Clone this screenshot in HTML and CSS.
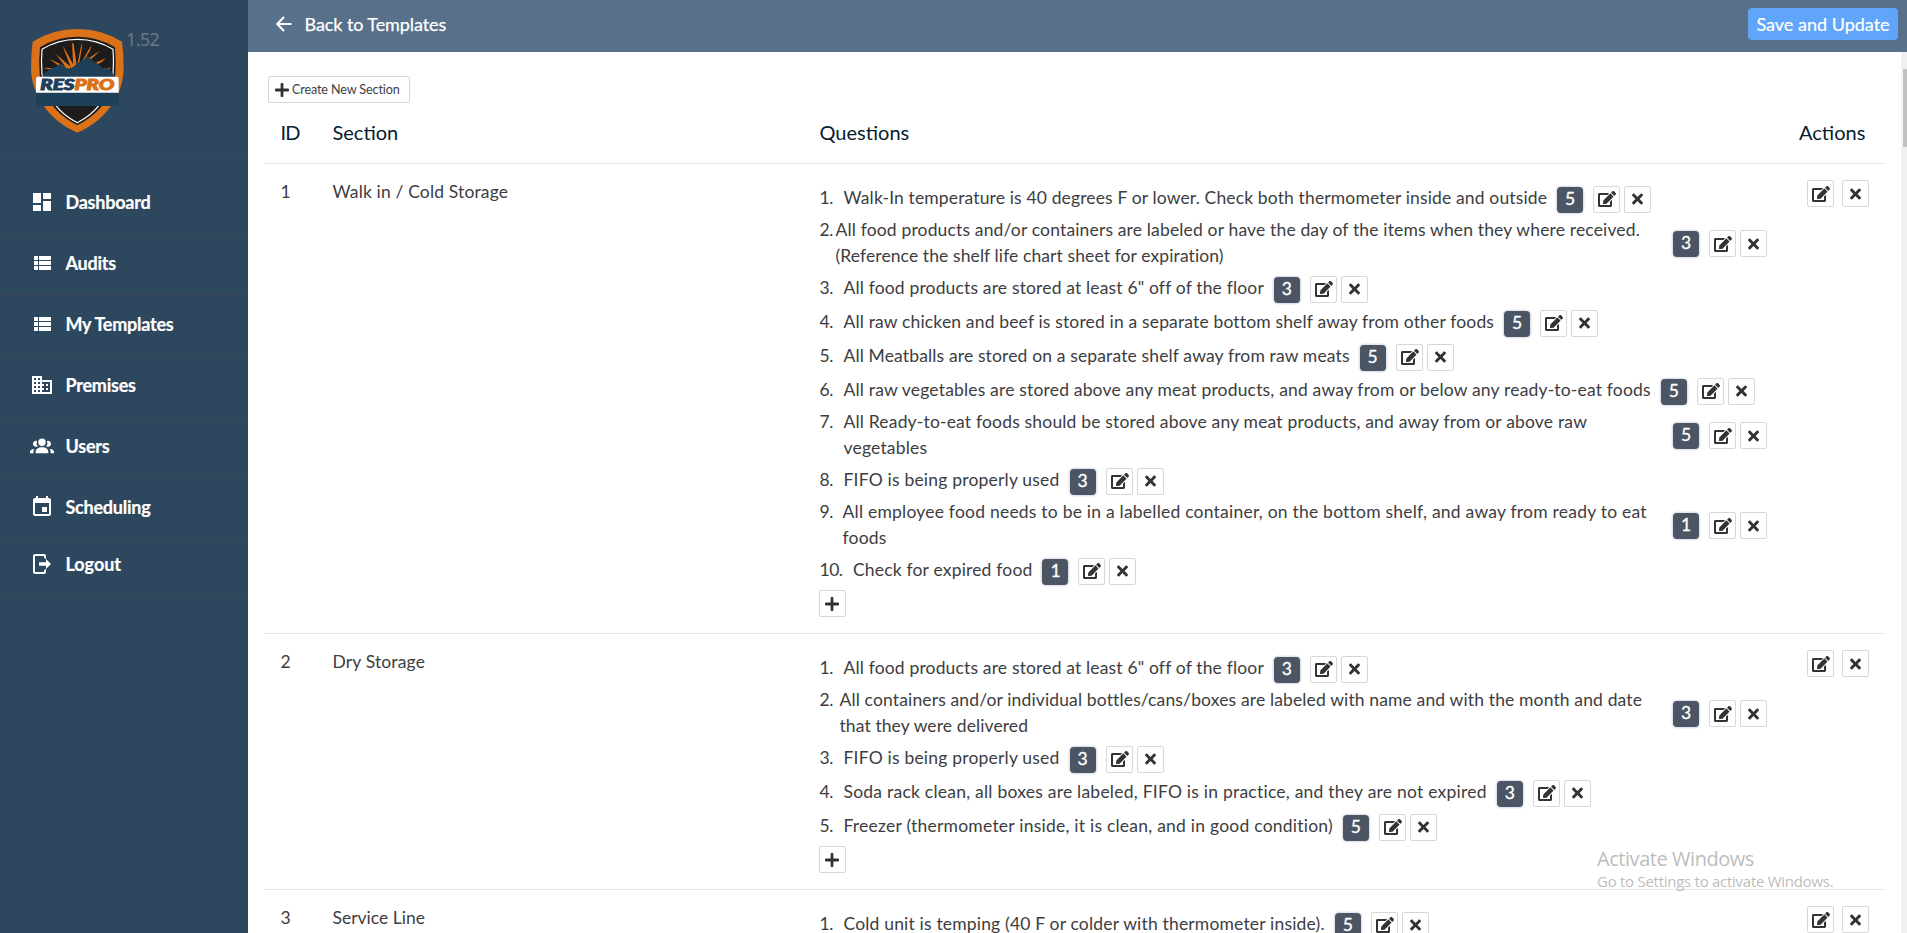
FILE: index.html
```
<!DOCTYPE html>
<html lang="en">
<head>
<meta charset="utf-8">
<title>ResPro - Edit Template</title>
<link rel="stylesheet" href="styles.css">
</head>
<body>
<svg class="sprite" aria-hidden="true">
  <symbol id="i-edit" viewBox="0 0 576 512"><path d="M402.6 83.2l90.2 90.2c3.8 3.8 3.8 10 0 13.8L274.4 405.6l-92.8 10.3c-12.4 1.4-22.9-9.1-21.5-21.5l10.3-92.8L388.8 83.2c3.8-3.8 10-3.8 13.8 0zm162-22.9l-48.8-48.8c-15.2-15.2-39.9-15.2-55.2 0l-35.4 35.4c-3.8 3.8-3.8 10 0 13.8l90.2 90.2c3.8 3.8 10 3.8 13.8 0l35.4-35.4c15.2-15.3 15.2-40 0-55.2zM384 346.2V448H64V128h229.8c3.2 0 6.2-1.3 8.5-3.5l40-40c7.6-7.6 2.2-20.5-8.5-20.5H48C21.5 64 0 85.5 0 112v352c0 26.5 21.5 48 48 48h352c26.5 0 48-21.5 48-48V306.2c0-10.7-12.9-16-20.5-8.5l-40 40c-2.2 2.3-3.5 5.3-3.5 8.5z"/></symbol>
  <symbol id="i-x" viewBox="0 0 352 512"><path d="M242.72 256l100.07-100.07c12.28-12.28 12.28-32.19 0-44.48l-22.24-22.24c-12.28-12.28-32.19-12.28-44.48 0L176 189.28 75.93 89.21c-12.28-12.28-32.19-12.28-44.48 0L9.21 111.45c-12.28 12.28-12.28 32.19 0 44.48L109.28 256 9.21 356.07c-12.28 12.28-12.28 32.19 0 44.48l22.24 22.24c12.28 12.28 32.2 12.28 44.48 0L176 322.72l100.07 100.07c12.28 12.28 32.2 12.28 44.48 0l22.24-22.24c12.28-12.28 12.28-32.19 0-44.48L242.72 256z"/></symbol>
  <symbol id="i-plus" viewBox="0 0 14 14"><path d="M5.6 1q0-1 1-1h.8q1 0 1 1v4.6H13q1 0 1 1v.8q0 1-1 1H8.400V13q0 1-1 1h-.8q-1 0-1-1V8.400H1q-1 0-1-1v-.8q0-1 1-1h4.600z"/></symbol>
  <symbol id="i-list" viewBox="0 0 24 24"><path d="M4 14h4v-4H4v4zm0 5h4v-4H4v4zM4 9h4V5H4v4zm5 5h12v-4H9v4zm0 5h12v-4H9v4zM9 5v4h12V5H9z"/></symbol>
</svg>

<div class="app">
  <aside class="sidebar">
    <div class="brand">
      <svg class="logo" viewBox="0 0 312 336">
        <path fill="#db7119" d="M20 53Q80 15 154 15Q228 15 288 53Q293 90 293 130C293 220 230 295 154 326C78 295 15 220 15 130Q15 90 20 53Z"/>
        <path fill="#1d1c1a" d="M42 70Q90 38 154 38Q218 38 267 70Q270 110 268 150C258 220 215 275 154 303C93 275 50 220 41 150Q38 110 42 70Z"/>
        <path fill="none" stroke="#fff" stroke-width="3.500" d="M48 76Q95 46 154 46Q213 46 261 76Q264 110 261 150C252 215 208 270 154 296C100 270 56 215 48 150Q45 110 48 76Z"/>
        <g fill="#db7119">
          <path d="M98 140L54 133 60 131 108 134ZM118 140L66 102 72 106 124 130ZM128 140L84 83 92 92 134 128ZM136 135L110 65 118 78 144 126ZM142 130L138 56 143 60 152 124ZM154 122L167 56 168 68 160 116ZM168 112L196 64 192 80 174 108ZM180 108L222 80 210 92 188 112ZM205 118L240 103 230 112 208 126ZM220 136L254 131 250 136 228 140Z"/>
        </g>
        <path fill="#204059" d="M50 160V152L72 134 88 128 103 119 122 132 133 136 160 114 172 108 185 95 200 111 218 120 231 136 243 130 262 150V160Z"/>
        <path fill="#fff" d="M30 164Q30 158 36 158H272Q278 158 278 164V207H30Z"/>
        <path fill="#1e4059" d="M30 206H278V240Q278 246 272 246H36Q30 246 30 240Z"/>
        <text class="logo-text" x="43" y="198" textLength="222" lengthAdjust="spacingAndGlyphs"><tspan fill="#1e4059" stroke="#1e4059">RES</tspan><tspan fill="#db7119" stroke="#db7119">PRO</tspan></text>
      </svg>
      <span class="version">1.52</span>
    </div>
    <nav class="menu">
      <a class="item"><svg viewBox="0 0 24 24"><path d="M3 13h8V3H3v10zm0 8h8v-6H3v6zm10 0h8V11h-8v10zm0-18v6h8V3h-8z"/></svg><span>Dashboard</span></a>
      <a class="item"><svg><use href="#i-list"/></svg><span>Audits</span></a>
      <a class="item"><svg><use href="#i-list"/></svg><span>My Templates</span></a>
      <a class="item"><svg viewBox="0 0 24 24"><path d="M12 7V3H2v18h20V7H12zM6 19H4v-2h2v2zm0-4H4v-2h2v2zm0-4H4V9h2v2zm0-4H4V5h2v2zm4 12H8v-2h2v2zm0-4H8v-2h2v2zm0-4H8V9h2v2zm0-4H8V5h2v2zm10 12h-8v-2h2v-2h-2v-2h2v-2h-2V9h8v10zm-2-8h-2v2h2v-2zm0 4h-2v2h2v-2z"/></svg><span>Premises</span></a>
      <a class="item"><svg viewBox="0 0 24 24"><circle cx="12" cy="8.300" r="3.700"/><path d="M5.700 19.200v-1.500C5.700 15 8 13.200 12 13.200s6.300 1.800 6.300 4.500v1.500zM7 7a4.800 4.800 0 0 0 .8 5.200A3 3 0 1 1 7 7zM17 7a4.800 4.800 0 0 1-.8 5.200A3 3 0 1 0 17 7zM0 19.200v-1.300c0-1.700 1.300-2.900 4.300-3-.7.9-.9 1.800-.9 2.800v1.500zM24 19.200v-1.300c0-1.700-1.300-2.900-4.300-3 .7.9.9 1.800.9 2.800v1.500z"/></svg><span>Users</span></a>
      <a class="item"><svg viewBox="0 0 24 24"><path d="M17 12h-5v5h5v-5zM16 1v2H8V1H6v2H5c-1.110 0-1.990.9-1.990 2L3 19c0 1.100.89 2 2 2h14c1.100 0 2-.9 2-2V5c0-1.100-.9-2-2-2h-1V1h-2zm3 18H5V8h14v11z"/></svg><span>Scheduling</span></a>
      <a class="item last"><svg viewBox="0 0 24 24"><path d="M5 2h9q2 0 2 2v3.500l-2-2V4H5v16h9v-1.500l2-2V20q0 2-2 2H5q-2 0-2-2V4q0-2 2-2zM9 10.200h7V7l5 5-5 5v-3.200H9z"/></svg><span>Logout</span></a>
    </nav>
  </aside>

  <main class="main">
    <header class="topbar">
      <a class="back"><svg viewBox="0 0 16 16"><path d="M15.500 8H1.500M8 1L1.300 8 8 15"/></svg><span>Back to Templates</span></a>
      <button class="save">Save and Update</button>
    </header>
    <div class="body">
      <div class="content">
        <button class="create"><svg><use href="#i-plus"/></svg><span>Create New Section</span></button>
        <div class="row head"><div class="id">ID</div><div>Section</div><div>Questions</div><div>Actions</div></div>

        <div class="row">
          <div class="name">1</div><div class="name">Walk in / Cold Storage</div>
          <div class="questions">
            <div class="q"><b class="n">1.</b><span class="t ls-14">Walk-In temperature is 40 degrees F or lower. Check both thermometer inside and outside</span><i class="score">5</i><button class="btn"><svg class="e"><use href="#i-edit"/></svg></button><button class="btn"><svg class="x"><use href="#i-x"/></svg></button></div>
            <div class="q multi"><b class="n n-16">2.</b><span class="t ls-16">All food products and/or containers are labeled or have the day of the items when they where received.<br><span class="ls-10">(Reference the shelf life chart sheet for expiration)</span></span><i class="score">3</i><button class="btn"><svg class="e"><use href="#i-edit"/></svg></button><button class="btn"><svg class="x"><use href="#i-x"/></svg></button></div>
            <div class="q"><b class="n">3.</b><span class="t ls-16">All food products are stored at least 6" off of the floor</span><i class="score">3</i><button class="btn"><svg class="e"><use href="#i-edit"/></svg></button><button class="btn"><svg class="x"><use href="#i-x"/></svg></button></div>
            <div class="q"><b class="n">4.</b><span class="t ls-16">All raw chicken and beef is stored in a separate bottom shelf away from other foods</span><i class="score">5</i><button class="btn"><svg class="e"><use href="#i-edit"/></svg></button><button class="btn"><svg class="x"><use href="#i-x"/></svg></button></div>
            <div class="q"><b class="n">5.</b><span class="t ls-14">All Meatballs are stored on a separate shelf away from raw meats</span><i class="score">5</i><button class="btn"><svg class="e"><use href="#i-edit"/></svg></button><button class="btn"><svg class="x"><use href="#i-x"/></svg></button></div>
            <div class="q"><b class="n">6.</b><span class="t ls-18">All raw vegetables are stored above any meat products, and away from or below any ready-to-eat foods</span><i class="score">5</i><button class="btn"><svg class="e"><use href="#i-edit"/></svg></button><button class="btn"><svg class="x"><use href="#i-x"/></svg></button></div>
            <div class="q multi"><b class="n">7.</b><span class="t ls-18">All Ready-to-eat foods should be stored above any meat products, and away from or above raw<br>vegetables</span><i class="score">5</i><button class="btn"><svg class="e"><use href="#i-edit"/></svg></button><button class="btn"><svg class="x"><use href="#i-x"/></svg></button></div>
            <div class="q"><b class="n">8.</b><span class="t ls-21">FIFO is being properly used</span><i class="score">3</i><button class="btn"><svg class="e"><use href="#i-edit"/></svg></button><button class="btn"><svg class="x"><use href="#i-x"/></svg></button></div>
            <div class="q multi"><b class="n n-23">9.</b><span class="t ls-22">All employee food needs to be in a labelled container, on the bottom shelf, and away from ready to eat<br>foods</span><i class="score">1</i><button class="btn"><svg class="e"><use href="#i-edit"/></svg></button><button class="btn"><svg class="x"><use href="#i-x"/></svg></button></div>
            <div class="q"><b class="n n-33">10.</b><span class="t ls-18">Check for expired food</span><i class="score">1</i><button class="btn"><svg class="e"><use href="#i-edit"/></svg></button><button class="btn"><svg class="x"><use href="#i-x"/></svg></button></div>
            <button class="btn add"><svg><use href="#i-plus"/></svg></button>
          </div>
          <div class="actions"><button class="btn"><svg class="e"><use href="#i-edit"/></svg></button><button class="btn"><svg class="x"><use href="#i-x"/></svg></button></div>
        </div>

        <div class="row">
          <div class="name">2</div><div class="name">Dry Storage</div>
          <div class="questions">
            <div class="q"><b class="n">1.</b><span class="t ls-16">All food products are stored at least 6" off of the floor</span><i class="score">3</i><button class="btn"><svg class="e"><use href="#i-edit"/></svg></button><button class="btn"><svg class="x"><use href="#i-x"/></svg></button></div>
            <div class="q multi"><b class="n n-20">2.</b><span class="t ls-14">All containers and/or individual bottles/cans/boxes are labeled with name and with the month and date<br><span class="ls-10">that they were delivered</span></span><i class="score">3</i><button class="btn"><svg class="e"><use href="#i-edit"/></svg></button><button class="btn"><svg class="x"><use href="#i-x"/></svg></button></div>
            <div class="q"><b class="n">3.</b><span class="t ls-21">FIFO is being properly used</span><i class="score">3</i><button class="btn"><svg class="e"><use href="#i-edit"/></svg></button><button class="btn"><svg class="x"><use href="#i-x"/></svg></button></div>
            <div class="q"><b class="n">4.</b><span class="t ls-23">Soda rack clean, all boxes are labeled, FIFO is in practice, and they are not expired</span><i class="score">3</i><button class="btn"><svg class="e"><use href="#i-edit"/></svg></button><button class="btn"><svg class="x"><use href="#i-x"/></svg></button></div>
            <div class="q"><b class="n">5.</b><span class="t ls-23">Freezer (thermometer inside, it is clean, and in good condition)</span><i class="score">5</i><button class="btn"><svg class="e"><use href="#i-edit"/></svg></button><button class="btn"><svg class="x"><use href="#i-x"/></svg></button></div>
            <button class="btn add"><svg><use href="#i-plus"/></svg></button>
          </div>
          <div class="actions"><button class="btn"><svg class="e"><use href="#i-edit"/></svg></button><button class="btn"><svg class="x"><use href="#i-x"/></svg></button></div>
        </div>

        <div class="row">
          <div class="name">3</div><div class="name ls-0">Service Line</div>
          <div class="questions">
            <div class="q"><b class="n">1.</b><span class="t ls-18">Cold unit is temping (40 F or colder with thermometer inside).</span><i class="score">5</i><button class="btn"><svg class="e"><use href="#i-edit"/></svg></button><button class="btn"><svg class="x"><use href="#i-x"/></svg></button></div>
          </div>
          <div class="actions"><button class="btn"><svg class="e"><use href="#i-edit"/></svg></button><button class="btn"><svg class="x"><use href="#i-x"/></svg></button></div>
        </div>
      </div>
      <div class="scroll"><div class="thumb"></div></div>
    </div>
  </main>
</div>
<div class="watermark"><div class="wm-title">Activate Windows</div><div class="wm-sub">Go to Settings to activate Windows.</div></div>
</body>
</html>
```
FILE: styles.css
```
* { box-sizing: border-box; }
body { margin: 0; height: 933px; overflow: hidden; font-family: Lato, "Liberation Sans", sans-serif; font-size: 17.5px; color: #3d3d3f; background: #fff; }
svg { display: block; flex: none; }
button { font: inherit; color: inherit; padding: 0; margin: 0; }
.sprite { display: none; }
.app { display: flex; height: 933px; overflow: hidden; }

/* Sidebar */
.sidebar { width: 248px; flex: none; background: #2d475e; }
.brand { display: flex; height: 160px; padding: 24px 0 0 26px; border-bottom: 1px solid #36475a; }
.logo { width: 104px; height: 112px; }
.logo-text { font: italic 900 43px Lato, sans-serif; stroke-width: 3px; }
.version { font-family: "Noto Sans", sans-serif; font-size: 18px; line-height: 24px; letter-spacing: -.6px; padding-top: 3px; margin-left: -4px; color: #6d7787; }
.menu { padding-top: 14px; }
.item { display: flex; align-items: center; height: 61px; padding: 0 0 4px 30px; gap: 11.5px; border-bottom: 1px solid #3c4659; color: #fff; font-weight: 700; font-size: 18px; letter-spacing: -.24px; -webkit-text-stroke: .2px #fff; }
.item svg { width: 24px; height: 24px; fill: #fff; }
.item span { padding-bottom: 1px; }
.item.last { height: 57px; padding-bottom: 8px; letter-spacing: -.03px; }

/* Top bar */
.main { flex: 1; min-width: 0; display: flex; flex-direction: column; }
.topbar { display: flex; flex: none; justify-content: space-between; align-items: center; height: 52px; padding: 0 9px 4px 28px; background: #587089; color: #fff; font-size: 18px; }
.back { display: flex; align-items: center; gap: 12.5px; letter-spacing: -.08px; -webkit-text-stroke: .25px #fff; }
.back span { padding-bottom: 1px; }
.back svg { width: 16px; height: 16px; fill: none; stroke: #fff; stroke-width: 2.1; }
.save { width: 150px; height: 32px; padding-bottom: 1px; border: 0; border-radius: 4px; background: #60a5fa; -webkit-text-stroke: .2px #fff; }

/* Template table */
.body { display: flex; flex: 1; min-height: 0; }
.content { flex: 1; padding: 24px 16px 0; overflow: hidden; }
.create { display: flex; align-items: center; gap: 3px; width: 142px; height: 27px; margin-left: 4px; padding-left: 6px; background: #fff; border: 1px solid #d6d6d6; border-radius: 2px; font-size: 12.6px; letter-spacing: -.13px; white-space: nowrap; }
.create svg { width: 14px; height: 14px; fill: #333; }
.row { display: grid; grid-template-columns: 52px 487px 979.5px 1fr; padding: 16px 0 16px 16.5px; border-bottom: 1px solid #e2e4e6; }
.head { height: 61px; padding-top: 16px; font-size: 20px; line-height: 26px; color: #05202e; }
.id { letter-spacing: -.8px; }
.name { line-height: 24px; letter-spacing: .15px; }
.questions { padding-top: 2px; letter-spacing: .14px; }
.q { display: flex; align-items: center; height: 34px; line-height: 26px; white-space: nowrap; }
.q.multi { width: 947.5px; height: 56px; align-items: flex-start; padding-top: 1px; }
.q.multi .t { flex: 1; }
.q.multi > .score { margin-top: 14px; }
.q.multi > .btn { margin-top: 13px; }
.n { width: 24px; flex: none; font-weight: 400; letter-spacing: -.5px; }
.n, .t { padding-bottom: 3px; }
.n-16 { width: 16px; }
.n-20 { width: 20px; }
.n-23 { width: 23px; }
.n-33 { width: 33.500px; }
.name.ls-0 { letter-spacing: 0; }
.ls-10 { letter-spacing: .1px; }
.ls-14 { letter-spacing: .14px; }
.ls-16 { letter-spacing: .157px; }
.ls-18 { letter-spacing: .178px; }
.ls-21 { letter-spacing: .2px; }
.ls-22 { letter-spacing: .22px; }
.ls-23 { letter-spacing: .23px; }
.score { width: 26px; height: 26px; margin: 1px 10px 0 10px; flex: none; border-radius: 4px; background: #4b5563; box-shadow: 0 0 0 1.5px #e2e5ec; color: #fff; font-style: normal; text-align: center; line-height: 23px; letter-spacing: 0; -webkit-text-stroke: .3px #fff; }
.btn { display: flex; align-items: center; justify-content: center; width: 27px; height: 27px; flex: none; background: #fff; border: 1px solid #d8d8d8; border-radius: 2px; fill: #333; }
.btn + .btn { margin-left: 4px; }
.e { width: 18px; height: 16px; margin-left: 1px; }
.x { width: 11px; height: 16px; }
.add { margin: 2px 0 0 -1px; }
.add svg { width: 14px; height: 14px; }
.actions { display: flex; padding-left: 8px; }
.actions .btn + .btn { margin-left: 8px; }

/* Scrollbar */
.scroll { width: 6px; flex: none; padding: 17px 0 0 2px; background: #f1f1f1; }
.thumb { height: 78px; background: #c1c1c1; }

/* Desktop watermark over the page */
.watermark { position: absolute; left: 1597px; top: 845px; color: rgba(120, 120, 120, .5); font-family: "Open Sans", sans-serif; white-space: nowrap; }
.wm-title { font-size: 20px; line-height: 27px; letter-spacing: -.45px; }
.wm-sub { font-size: 15px; line-height: 19px; letter-spacing: -.27px; }
```
